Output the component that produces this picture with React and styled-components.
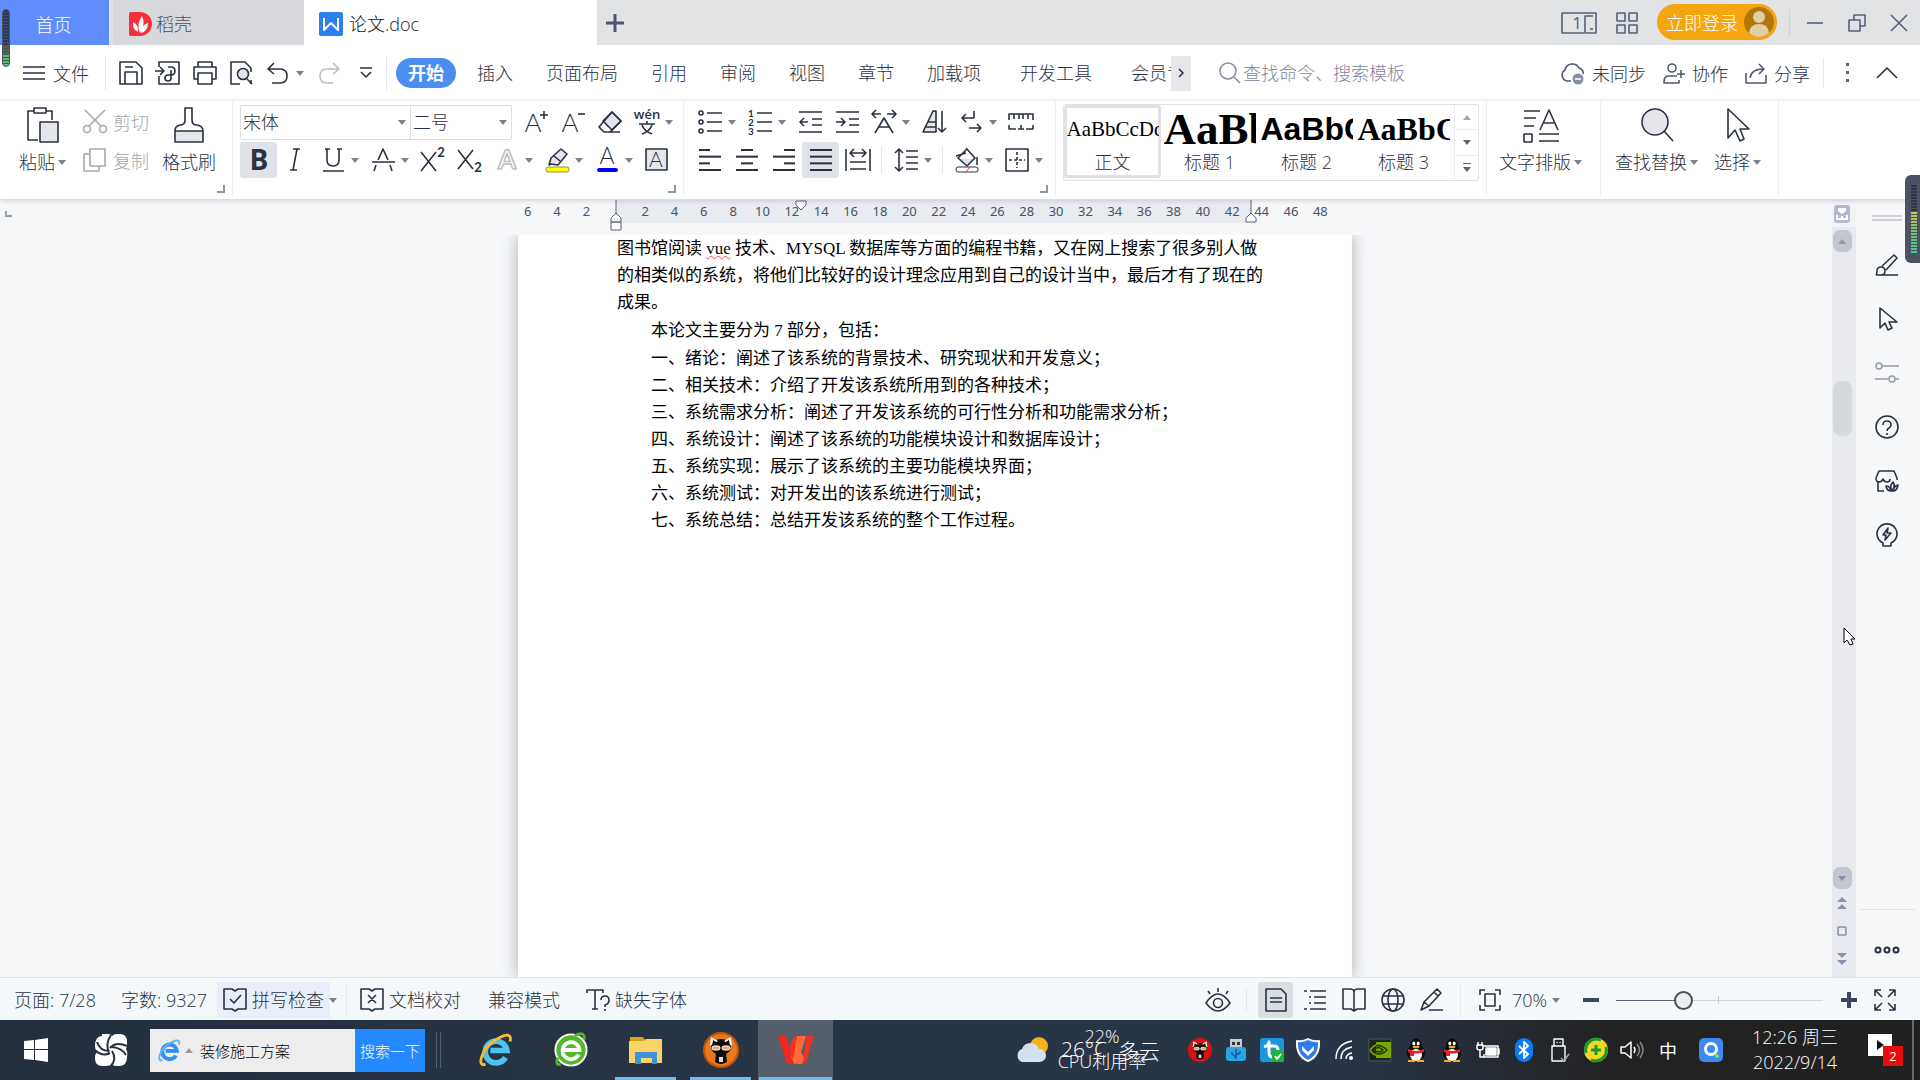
import React, { useState } from "react";
import styled, { createGlobalStyle, css } from "styled-components";

const ui = `"Open Sans", "Noto Sans CJK SC", sans-serif`;
const ink = "#2b3142";
const mute = "#a6a8ad";

const GlobalStyle = createGlobalStyle`
  * {
    box-sizing: border-box;
  }
  body {
    margin: 0;
    overflow: hidden;
    font-family: ${ui};
    font-size: 18px;
    font-weight: 300;
    color: ${ink};
  }
  button, input, select {
    margin: 0;
    padding: 0;
    border: 0;
    background: none;
    font: inherit;
    color: inherit;
  }
  svg {
    display: block;
    flex: none;
    overflow: visible;
  }
`;

const Window = styled.div`
  display: flex;
  flex-direction: column;
  height: 100vh;
  background: #f5f7f9;
  white-space: nowrap;
`;

const Row = styled.div`
  display: flex;
  align-items: center;
`;

const Spacer = styled.div`
  flex: 1;
`;

/* title bar */

const TitleBar = styled.header`
  display: flex;
  align-items: stretch;
  height: 45px;
  background: #e2e3e5;
`;

const DocTab = styled.button`
  display: flex;
  align-items: center;
  gap: ${p => (p.$active ? 6 : 4)}px;
  width: ${p => p.$width}px;
  padding: 2px 16px 0 ${p => (p.$active ? 15 : 16)}px;
  background: ${p => (p.$active ? "#fff" : "#d8d9dd")};
  border-left: ${p => (p.$active ? 0 : 4)}px solid #dfe0e3;
  color: ${p => (p.$active ? "#15171c" : "#4b5060")};
  line-height: 24px;
`;

const HomeTab = styled.button`
  width: 109px;
  padding: 3px 2px 0 0;
  background: #5f8dfb;
  color: #fff;
`;

const NewTab = styled.button`
  width: 36px;
  display: flex;
  align-items: center;
  justify-content: center;
`;

const TitleTools = styled.div`
  display: flex;
  align-items: center;
  gap: 19px;
  color: #55607a;
`;

const Login = styled.button`
  display: flex;
  align-items: center;
  gap: 6px;
  width: 120px;
  height: 36px;
  margin-bottom: 1px;
  padding: 0 3px 0 9px;
  border-radius: 18px;
  background: #f4a50f;
  color: #fff;
`;

const WindowButtons = styled.div`
  display: flex;
  align-items: center;
  height: 28px;
  border-left: 1px solid #cfd1d6;
  padding-left: 4px;
  margin-left: -7px;
`;

const WindowButton = styled.button`
  width: 42px;
  display: flex;
  justify-content: center;
`;

/* menu row */

const MenuRow = styled.nav`
  display: flex;
  align-items: center;
  height: 56px;
  background: #fff;
  padding: 0 18px 0 23px;
`;

const FileButton = styled.button`
  display: flex;
  align-items: center;
  gap: 8px;
  width: 82px;
`;

const Divider = styled.span`
  flex: none;
  width: 1px;
  height: ${p => p.$height || 34}px;
  margin-left: ${p => p.$space || 0}px;
  background: #e6e7ea;
`;

const QuickBar = styled.div`
  display: flex;
  align-items: center;
  padding-left: 6px;
  width: 280px;
`;

const QuickButton = styled.button`
  display: flex;
  align-items: center;
  justify-content: center;
  width: ${p => p.$width || 37}px;
  height: 34px;
`;

const ActiveTab = styled.button`
  width: 60px;
  height: 30px;
  margin: 0 21px 0 9px;
  border-radius: 15px;
  background: #4a8ff0;
  color: #fff;
  font-weight: 700;
  line-height: 26px;
`;

const MenuTab = styled.button`
  margin-right: ${p => (p.$wide ? 39 : 33)}px;
  line-height: 26px;
`;

const ClippedTab = styled.button`
  width: 40px;
  overflow: hidden;
  text-align: left;
  line-height: 26px;
`;

const ScrollTabs = styled.button`
  display: flex;
  align-items: center;
  justify-content: center;
  width: 20px;
  height: 35px;
  background: #e5e7ea;
`;

const CommandSearch = styled.label`
  display: flex;
  align-items: center;
  gap: 2px;
  margin-left: 28px;
  input {
    width: 220px;
    line-height: 26px;
    outline: none;
  }
  input::placeholder {
    color: #80879b;
    opacity: 1;
  }
`;

const ShareTools = styled.div`
  display: flex;
  align-items: center;
  gap: 17px;
  padding-right: 13px;
`;

const ShareButton = styled.button`
  display: flex;
  align-items: center;
  gap: 7px;
  padding-top: 1px;
  line-height: 26px;
`;

/* ribbon */

const Ribbon = styled.div`
  position: relative;
  z-index: 1;
  display: flex;
  height: 98px;
  background: #fff;
  box-shadow: 0 1px 5px rgba(40, 50, 70, 0.22);
`;

const Group = styled.section`
  position: relative;
  display: flex;
  gap: ${p => p.$gap || 0}px;
  padding: 3px ${p => p.$right || 8}px 0 ${p => p.$left || 8}px;
  margin-bottom: 3px;
  border-right: 1px solid #eceef0;
`;

const Corner = styled.i`
  position: absolute;
  right: 7px;
  bottom: 3px;
  width: 8px;
  height: 8px;
  border: solid #8e94a2;
  border-width: 0 2px 2px 0;
`;

const BigButton = styled.button`
  display: flex;
  flex-direction: column;
  align-items: center;
  gap: 6px;
  min-width: ${p => p.$width}px;
  padding-top: 3px;
  line-height: 26px;
  svg {
    margin: 0 auto;
  }
`;

const SmallButton = styled.button`
  display: flex;
  align-items: center;
  gap: 6px;
  height: 36px;
  color: ${mute};
`;

const ToolRows = styled.div`
  display: flex;
  flex-direction: column;
  gap: 2px;
  margin-left: ${p => p.$indent || 0}px;
`;

const ToolButton = styled.button`
  display: flex;
  align-items: center;
  height: 36px;
  width: ${p => (p.$caret ? 50 : 37)}px;
  border-radius: 3px;
  background: ${p => (p.$on ? "#dfe2e7" : "none")};
`;

const ToolFace = styled.span`
  display: flex;
  align-items: center;
  justify-content: center;
  width: 37px;
  height: 36px;
`;

const ToolDivider = styled.span`
  width: 1px;
  height: 28px;
  margin: 0 5px;
  background: #e3e5e8;
`;

const Fields = styled.div`
  display: flex;
  width: 272px;
  height: 35px;
  margin-right: 5px;
  border: 1px solid #dcdee2;
  border-radius: 2px;
`;

const Field = styled.label`
  display: flex;
  align-items: center;
  flex: ${p => p.$grow};
  padding: 0 4px 0 2px;
  & + & {
    border-left: 1px solid #dcdee2;
  }
  select {
    flex: 1;
    width: 0;
    height: 33px;
    appearance: none;
    outline: none;
  }
`;

const Gallery = styled.div`
  display: flex;
  width: 416px;
  height: 77px;
  border: 1px solid #dfe1e5;
  border-radius: 3px;
`;

const StyleItem = styled.button`
  display: flex;
  flex-direction: column;
  align-items: center;
  width: 97px;
  height: 73px;
  border: 3px solid ${p => (p.$on ? "#e0e2e6" : "transparent")};
  border-radius: 3px;
  line-height: 26px;
`;

const Sample = styled.span`
  display: block;
  width: 92px;
  height: 43px;
  overflow: hidden;
  text-align: left;
  color: #000;
  line-height: 43px;
  font-family: ${p => p.$font || `"Liberation Serif", serif`};
  font-size: ${p => p.$size}px;
  font-weight: ${p => (p.$bold ? 700 : 400)};
`;

const GalleryScroll = styled.div`
  display: flex;
  flex-direction: column;
  width: 24px;
  margin-left: auto;
  border-left: 1px solid #eceef0;
  button {
    flex: 1;
    display: flex;
    align-items: center;
    justify-content: center;
  }
  button + button {
    border-top: 1px solid #eceef0;
  }
`;

/* editor */

const Workspace = styled.main`
  flex: 1;
  min-height: 0;
  display: flex;
`;

const Editor = styled.div`
  flex: 1;
  display: flex;
  flex-direction: column;
  min-height: 0;
`;

const RulerRow = styled.div`
  position: relative;
  display: flex;
  flex: none;
  justify-content: center;
  height: 36px;
  padding-top: 1px;
  padding-left: 16px;
`;

const TabMark = styled.i`
  position: absolute;
  left: 5px;
  top: 12px;
  width: 7px;
  height: 6px;
  border: solid #9aa0ac;
  border-width: 0 0 2px 2px;
`;

const RulerScale = styled.div`
  position: relative;
  display: grid;
  grid-template-columns: repeat(28, 1fr);
  width: 822px;
  height: 23px;
  font: 400 13px/22px "Noto Sans", sans-serif;
  color: #4c5364;
  text-align: center;
  background: linear-gradient(90deg, transparent 103px, #e8ebf0 103px 738px, transparent 738px);
`;

const Marker = styled.svg`
  position: absolute;
  top: 0;
  left: ${p => p.$at}px;
`;

const Canvas = styled.div`
  flex: 1;
  min-height: 0;
  display: flex;
  justify-content: center;
  padding-left: 38px;
  overflow: hidden;
`;

const Page = styled.article`
  width: 834px;
  padding: 0 99px;
  background: #fff;
  box-shadow: 0 0 15px rgba(60, 66, 80, 0.4);
  color: #000;
  font-family: "Liberation Serif", "Noto Sans CJK SC", serif;
  font-size: 17px;
  font-weight: 400;
  line-height: 27px;
  p {
    margin: 0 0 1px;
  }
  ol {
    list-style: none;
    margin: 0;
    padding: 0;
  }
  li, p.indent {
    padding-left: 34px;
  }
`;

const Misspelled = styled.span`
  text-decoration: underline wavy #e0474c 1px;
`;

const ScrollColumn = styled.div`
  display: flex;
  flex-direction: column;
  align-items: center;
  width: 24px;
  padding: 0 4px 4px 0;
  background: #e8eaf0;
`;

const RulerToggle = styled.button`
  display: flex;
  justify-content: center;
  width: 24px;
  height: 28px;
  margin-right: -4px;
  padding: 6px 4px 0 0;
  background: #f2f3f7;
`;

const ScrollArrow = styled.button`
  display: flex;
  align-items: center;
  justify-content: center;
  flex: none;
  width: 19px;
  height: 22px;
  margin-top: 3px;
  border-radius: 7px;
  background: #c3c6ce;
`;

const ScrollTrack = styled.div`
  flex: 1;
  padding-top: 129px;
`;

const ScrollThumb = styled.div`
  width: 19px;
  height: 55px;
  border-radius: 8px;
  background: #d5d8dd;
`;

const PageJump = styled.button`
  display: flex;
  align-items: center;
  justify-content: center;
  height: 28px;
  width: 20px;
`;

const SidePanel = styled.aside`
  display: flex;
  flex-direction: column;
  align-items: center;
  width: 64px;
  padding: 16px 3px 0 0;
`;

const Grip = styled.span`
  width: 30px;
  height: 6px;
  margin-bottom: 17px;
  border: solid #cfd1d5;
  border-width: 2px 0;
`;

const SideButton = styled.button`
  display: flex;
  align-items: center;
  justify-content: center;
  width: 56px;
  height: 54px;
`;

const SideMore = styled.div`
  margin-top: auto;
  height: 68px;
  padding-top: 13px;
  border-top: 1px solid #dfe1e5;
`;

/* status bar */

const StatusBar = styled.footer`
  display: flex;
  align-items: center;
  height: 43px;
  border-top: 1px solid #dfe3e8;
  background: #f5f8fa;
  padding: 2px 16px 0 14px;
`;

const StatusItem = styled.button`
  display: flex;
  align-items: center;
  gap: 5px;
  height: 36px;
  width: ${p => (p.$width ? `${p.$width}px` : "auto")};
  margin-left: ${p => p.$before || 0}px;
  margin-right: ${p => (p.$tight ? 0 : 14)}px;
  line-height: 24px;
  ${p =>
    p.$tint &&
    css`
      margin: 0 16px 0 -4px;
      padding-left: 6px;
      background: #e8effa;
    `}
`;

const ViewButton = styled.button`
  display: flex;
  align-items: center;
  justify-content: center;
  width: ${p => p.$width || 35}px;
  height: 36px;
  border-radius: 3px;
  background: ${p => (p.$on ? "#d9dee3" : "none")};
`;

const ViewGroup = styled.div`
  display: flex;
  gap: 4px;
  padding: 0 11px;
`;

const Zoom = styled.input`
  appearance: none;
  width: 207px;
  height: 20px;
  margin: 0 8px 0 10px;
  background:
    linear-gradient(#c5c9d0, #c5c9d0) 102px 50% / 1px 8px no-repeat,
    linear-gradient(90deg, #59617a 68px, #d3d6db 68px) 0 50% / 100% 1px no-repeat;
  &::-webkit-slider-thumb {
    appearance: none;
    width: 19px;
    height: 19px;
    border: 2px solid #4b4f58;
    border-radius: 50%;
    background: #eceded;
  }
`;

/* taskbar */

const Taskbar = styled.footer`
  display: flex;
  align-items: center;
  height: 60px;
  background: linear-gradient(90deg, #232f3d, #283545 40%, #293546 70%, #222 84%, #202020);
  color: #fff;
`;

const StartButton = styled.button`
  display: flex;
  justify-content: center;
  width: ${p => p.$width}px;
`;

const TaskSearch = styled.form`
  display: flex;
  align-items: center;
  gap: 4px;
  width: 275px;
  height: 43px;
  padding-left: 8px;
  background: #ededed;
  font-size: 15px;
  input {
    flex: 1;
    width: 0;
    height: 30px;
    margin-left: 3px;
    color: #000;
  }
  button {
    width: 70px;
    height: 43px;
    background: #2488ff;
  }
`;

const Bars = styled.span`
  width: 5px;
  height: 36px;
  margin: 0 17px 0 11px;
  border: solid #566170;
  border-width: 0 1px;
`;

const AppButton = styled.button`
  position: relative;
  display: flex;
  align-items: center;
  justify-content: center;
  width: 75px;
  height: 60px;
  background: ${p => (p.$on ? "#545f6b" : "none")};
  &::after {
    content: "";
    position: absolute;
    bottom: 0;
    width: ${p => (p.$on ? 73 : 61)}px;
    height: 3px;
    background: ${p => (p.$open ? "#76b9ed" : "none")};
  }
`;

const Weather = styled.button`
  position: relative;
  display: flex;
  align-items: center;
  gap: 12px;
  width: 167px;
  height: 60px;
  font-size: 21px;
`;

const Forecast = styled.span`
  display: flex;
  gap: 11px;
`;

const CpuMeter = styled.span`
  position: absolute;
  left: 42px;
  top: 4px;
  width: 90px;
  text-align: center;
  font-size: 18px;
  line-height: 25px;
`;

const TrayButton = styled.button`
  display: flex;
  align-items: center;
  justify-content: center;
  width: ${p => p.$width || 36}px;
  height: 60px;
  font-weight: 400;
`;

const Clock = styled.time`
  width: 118px;
  text-align: center;
  line-height: 25px;
`;

const Notices = styled.button`
  display: flex;
  align-items: center;
  justify-content: flex-end;
  width: 60px;
  height: 60px;
  margin-right: 6px;
  padding-right: 8px;
  border-right: 2px solid #6a6a6a;
`;

/* desktop overlays */

const LevelMeter = styled.div`
  position: fixed;
  z-index: 5;
  ${p =>
    p.$left
      ? css`
          left: 2px;
          top: 9px;
          width: 8px;
          height: 58px;
          border: 1px solid #4a5270;
          border-radius: 4px;
          background:
            repeating-linear-gradient(transparent 0 2px, #3c5a4a 2px 3px),
            linear-gradient(#273866 34px, #5a605e 36px 45px, #57c06e 45px);
        `
      : css`
          right: 0;
          top: 175px;
          width: 15px;
          height: 88px;
          padding: 9px 0 0 6px;
          border-radius: 6px 0 0 6px;
          background: #4b5261;
        `}
  i {
    display: block;
    width: 6px;
    height: 70px;
    background:
      repeating-linear-gradient(#4b5261 0 1px, transparent 1px 3px),
      linear-gradient(#2f3542 27px, #d3c551 27px, #7cc06f 48px, #42c3a5);
  }
`;

const Pointer = styled.svg`
  position: fixed;
  left: 1843px;
  top: 627px;
`;

const Icon = ({ w = 24, h = 24, sw = 1.6, color = "currentColor", children }) => (
  <svg
    width={w}
    height={h}
    viewBox={`0 0 ${w} ${h}`}
    fill="none"
    stroke={color}
    strokeWidth={sw}
    strokeLinejoin="round"
    aria-hidden="true"
  >
    {children}
  </svg>
);

const Caret = ({ up, color = "#7c8190" }) => (
  <svg width="8" height="5" viewBox="0 0 8 5" aria-hidden="true">
    <path d={up ? "M0 5 4 0l4 5z" : "M0 0h8L4 5z"} fill={color} />
  </svg>
);

const Glyph = ({ x = 12, y = 20, size = 24, weight = 400, font = "Lato", fill = ink, children, ...rest }) => (
  <text x={x} y={y} fontSize={size} fontWeight={weight} fontFamily={font} fill={fill} stroke="none" textAnchor="middle" {...rest}>
    {children}
  </text>
);

const Tool = ({ label, caret, on, children }) => (
  <ToolButton type="button" title={label} aria-label={label} $caret={caret} $on={on}>
    <ToolFace>{children}</ToolFace>
    {caret && <Caret />}
  </ToolButton>
);

const Lines = ({ rows }) => (
  <Icon w={24} h={26} sw={2}>
    {rows.map(([a, b], i) => (
      <path key={i} d={`M${a} ${3 + i * (20 / (rows.length - 1))}H${b}`} />
    ))}
  </Icon>
);

const Browser = ({ size, blue, ring = "#f3bd2b" }) => (
  <svg width={size} height={size} viewBox="0 0 36 36" fill="none" aria-hidden="true">
    <path d="M28 26a11.500 11.500 0 1 1 1.500-7.500H12" stroke={blue} strokeWidth="6" />
    <path d="M7 33C-3 37 3 17 15 9S35-1 33 9" stroke={ring} strokeWidth="3" />
  </svg>
);

const Penguin = () => (
  <Icon w={22} h={24} sw={0}>
    <ellipse cx="11" cy="15" rx="9" ry="8" fill="#0b0b0b" />
    <ellipse cx="11" cy="8" rx="6" ry="7.500" fill="#0b0b0b" />
    <ellipse cx="11" cy="17" rx="6" ry="6" fill="#fff" />
    <ellipse cx="8.800" cy="5.500" rx="1.500" ry="2" fill="#fff" />
    <ellipse cx="13.200" cy="5.500" rx="1.500" ry="2" fill="#fff" />
    <ellipse cx="11" cy="9" rx="3.500" ry="1.300" fill="#f5a623" />
    <path d="M3 11q8 4 16 0v3q-8 3-16 0z" fill="#e5202b" />
    <path d="M5 13h4v5H5z" fill="#e5202b" />
    <path d="M3 22h7v2H3zM12 22h7v2h-7z" fill="#f5a623" />
  </Icon>
);

const CatBadge = ({ size, color, rim }) => (
  <svg width={size} height={size} viewBox="0 0 36 36" aria-hidden="true">
    <circle cx="18" cy="18" r="17" fill={color} stroke={rim} strokeWidth="2" />
    <ellipse cx="18" cy="15" rx="10" ry="8" fill="#0d0d0d" />
    <path d="M7 14 8 5l7 4zM29 14l-1-9-7 4z" fill="#fff" />
    <path d="M9 14 10 8l5 3zM27 14l-1-6-5 3z" fill="#0d0d0d" />
    <path d="M13 21h10l1 9q-6 4-12 0z" fill="#0d0d0d" />
    <rect x="9" y="14" width="8" height="4" rx="2" fill="#f6a25d" stroke="#fff" />
    <rect x="19" y="14" width="8" height="4" rx="2" fill="#f6a25d" stroke="#fff" />
    <path d="M16 25h4v5h-4z" fill="#ddd" />
  </svg>
);

const chapters = [
  "一、绪论：阐述了该系统的背景技术、研究现状和开发意义；",
  "二、相关技术：介绍了开发该系统所用到的各种技术；",
  "三、系统需求分析：阐述了开发该系统的可行性分析和功能需求分析；",
  "四、系统设计：阐述了该系统的功能模块设计和数据库设计；",
  "五、系统实现：展示了该系统的主要功能模块界面；",
  "六、系统测试：对开发出的该系统进行测试；",
  "七、系统总结：总结开发该系统的整个工作过程。",
];

const menuTabs = ["插入", "页面布局", "引用", "审阅", "视图", "章节"];

const rulerNumbers = [6, 4, 2, ""].concat(Array.from({ length: 24 }, (_, i) => (i + 1) * 2));

const Title = () => (
  <TitleBar>
    <HomeTab>首页</HomeTab>
    <DocTab $width={195}>
      <Icon w={23} h={24} sw={0}>
        <path d="M2 0h9a12 12 0 0 1 0 24H2q-2 0-2-2V2q0-2 2-2z" fill="#f5303a" />
        <path d="M11 21Q7 12 13 4q4 8-2 17zM9 20Q3 17 4 10q6 3 5 10zM12 21q0-8 7-10 0 8-7 10z" fill="#fff" />
      </Icon>
      稻壳
    </DocTab>
    <DocTab $active $width={293}>
      <Icon w={24} h={24} sw={2} color="#fff">
        <rect width="24" height="24" rx="2" fill="#2d7ff0" stroke="none" />
        <path d="M5 6v12l7-7 7 7V6" />
      </Icon>
      论文.doc
    </DocTab>
    <NewTab aria-label="新建">
      <Icon w={18} h={18} sw={3} color="#4c566f">
        <path d="M9 0v18M0 9h18" />
      </Icon>
    </NewTab>
    <Spacer />
    <TitleTools>
      <Icon w={36} h={22}>
        <path d="M23 21H1V1h34v20H24V4h8M29 17h3" />
        <Glyph x={16} y={17} size={17} font="Open Sans" fill="#55607a">1</Glyph>
      </Icon>
      <Icon w={22} h={22}>
        <path d="M1 1h8v8H1zM13 1h8v8h-8zM1 13h8v8H1zM13 13h8v8h-8z" />
      </Icon>
      <Login>
        立即登录
        <Icon w={30} h={30} sw={0}>
          <circle cx="15" cy="15" r="15" fill="#b1770d" />
          <circle cx="15" cy="10" r="6" fill="#e3cda2" />
          <path d="M5 26q1-9 10-9t10 9q-10 8-20 0z" fill="#e3cda2" />
        </Icon>
      </Login>
      <WindowButtons>
        <WindowButton aria-label="最小化">
          <Icon w={16} h={18}><path d="M0 9h16" /></Icon>
        </WindowButton>
        <WindowButton aria-label="还原">
          <Icon w={18} h={18}><path d="M1 6h11v11H1zM6 6V1h11v11h-5" /></Icon>
        </WindowButton>
        <WindowButton aria-label="关闭">
          <Icon w={16} h={16}><path d="m0 0 16 16M16 0 0 16" /></Icon>
        </WindowButton>
      </WindowButtons>
    </TitleTools>
  </TitleBar>
);

const Menu = () => (
  <MenuRow>
    <FileButton>
      <Icon w={22} h={16}><path d="M0 2h22M0 8h22M0 14h22" /></Icon>
      文件
    </FileButton>
    <Divider />
    <QuickBar>
      <QuickButton aria-label="保存">
        <Icon w={24} h={24}><path d="M1 1h16l6 6v16H1zM6 23V11h12v12M6 6h8" /></Icon>
      </QuickButton>
      <QuickButton aria-label="输出为PDF">
        <Icon w={26} h={24}>
          <path d="M4 6V1h20v22H4v-8M0 10h9M5 6l4 4-4 4" />
          <path d="M13 6h3q4 0 4 4t-4 4h-3q-3 0-3 3t3 3 3-3V9" />
        </Icon>
      </QuickButton>
      <QuickButton aria-label="打印">
        <Icon w={24} h={24}><path d="M5 6V1h14v5M5 18H1V6h22v12h-4M5 12h14v11H5z" /></Icon>
      </QuickButton>
      <QuickButton aria-label="打印预览">
        <Icon w={24} h={24}>
          <path d="M10 23H1V1h14l6 6v4M21 19v4" />
          <circle cx="13" cy="13" r="5.500" fill="#e4e6eb" />
          <path d="m17 18 5 5" />
        </Icon>
      </QuickButton>
      <QuickButton aria-label="撤销" $width={36}>
        <Icon w={22} h={22}><path d="M7 1 1 7l6 5M1 7h12q7 0 7 7t-7 7H5" /></Icon>
      </QuickButton>
      <Caret />
      <QuickButton aria-label="恢复" $width={50}>
        <Icon w={22} h={22} color="#b9bcc3"><path d="m15 1 6 6-6 5M21 7H9q-7 0-7 7t7 7h6" /></Icon>
      </QuickButton>
      <QuickButton aria-label="自定义" $width={24}>
        <Icon w={12} h={12}><path d="M0 1h12M1 5l5 5 5-5" /></Icon>
      </QuickButton>
    </QuickBar>
    <Divider />
    <ActiveTab>开始</ActiveTab>
    {menuTabs.map(name => (
      <MenuTab key={name}>{name}</MenuTab>
    ))}
    <MenuTab $wide>加载项</MenuTab>
    <MenuTab $wide>开发工具</MenuTab>
    <ClippedTab>会员专享</ClippedTab>
    <ScrollTabs aria-label="更多选项卡">
      <Icon w={6} h={10}><path d="m1 1 4 4-4 4" /></Icon>
    </ScrollTabs>
    <CommandSearch>
      <Icon w={22} h={22} color="#8d93a5"><circle cx="9" cy="9" r="8" /><path d="m15 15 6 6" /></Icon>
      <input aria-label="查找命令" placeholder="查找命令、搜索模板" />
    </CommandSearch>
    <Spacer />
    <ShareTools>
      <ShareButton>
        <Icon w={25} h={22} color="#4f5a72">
          <path d="M11 18H7a6 6 0 0 1-2-11A7.500 7.500 0 0 1 19 5q5 2 4 6" />
          <circle cx="18" cy="16" r="5.500" fill="#8590a8" stroke="none" />
          <path d="M15 16h6" stroke="#fff" />
        </Icon>
        未同步
      </ShareButton>
      <ShareButton>
        <Icon w={22} h={22} color="#4f5a72">
          <circle cx="9" cy="5" r="4" />
          <path d="M14 13H5q-4 0-4 7h15v-3M18 7v8M14 11h8" />
        </Icon>
        协作
      </ShareButton>
      <ShareButton>
        <Icon w={22} h={22} color="#4f5a72">
          <path d="M1 10v10h20v-8M5 15q1-9 14-9M14 1l5 5-5 5" />
        </Icon>
        分享
      </ShareButton>
    </ShareTools>
    <Divider $height={30} />
    <QuickButton aria-label="更多" $width={48}>
      <Icon w={4} h={20} sw={0}>
        <path d="M0 0h3v3H0zM0 8h3v3H0zM0 16h3v3H0z" fill="#5c6375" />
      </Icon>
    </QuickButton>
    <QuickButton aria-label="收起功能区" $width={30}>
      <Icon w={22} h={12}><path d="M1 11 11 1l10 10" /></Icon>
    </QuickButton>
  </MenuRow>
);

const Dropdown = ({ children }) => (
  <Row as="span">
    {children}
    <svg width="12" height="5" viewBox="-3 0 12 5" aria-hidden="true"><path d="M0 0h8L4 5z" fill="#7c8190" /></svg>
  </Row>
);

const RibbonBar = () => (
  <Ribbon>
    <Group $left={18} $right={3}>
      <BigButton $width={50}>
        <Icon w={34} h={36}>
          <path d="M12 33H2V4h6M20 4h6v9" />
          <path d="M8 1h12v5H8z" />
          <path d="M14 15h18v20H14z" fill="#e4e6eb" />
        </Icon>
        <Dropdown>粘贴</Dropdown>
      </BigButton>
      <ToolRows $indent={15}>
        <SmallButton>
          <Icon w={24} h={24} color={mute}>
            <circle cx="4" cy="19" r="3.500" /><circle cx="20" cy="19" r="3.500" />
            <path d="M2 0l16 16M22 0 6 16" />
          </Icon>
          剪切
        </SmallButton>
        <SmallButton>
          <Icon w={24} h={24} color={mute}><path d="M7 1h15v17H7zM7 6H1v17h15v-5" /></Icon>
          复制
        </SmallButton>
      </ToolRows>
      <BigButton $width={80}>
        <Icon w={30} h={36}>
          <path d="M1 24h28v11H1z" fill="#e4e6eb" />
          <path d="M1 24q0-5 5-6 5 0 5-5V1h7v12q0 5 5 5 6 1 6 6" />
        </Icon>
        格式刷
      </BigButton>
      <Corner />
    </Group>

    <Group $left={7} $right={5}>
      <ToolRows>
        <Row>
          <Fields>
            <Field $grow={172}>
              <select aria-label="字体"><option>宋体</option></select>
              <Caret />
            </Field>
            <Field $grow={99}>
              <select aria-label="字号"><option>二号</option></select>
              <Caret />
            </Field>
          </Fields>
          <Tool label="增大字号">
            <Icon w={24} h={24}><Glyph x={9} y={22} size={26} weight={300}>A</Glyph><path d="M20 1v8M16 5h8" /></Icon>
          </Tool>
          <Tool label="减小字号">
            <Icon w={24} h={24}><Glyph x={9} y={22} size={26} weight={300}>A</Glyph><path d="M17 4h7" /></Icon>
          </Tool>
          <Tool label="清除格式">
            <Icon w={24} h={24}>
              <path d="M14 2l9 9-9 9-9-9z" fill="#e4e6eb" />
              <path d="m14 2 9 9-11 11H6l-5-5zM6 22h16" />
            </Icon>
          </Tool>
          <Tool label="拼音指南" caret>
            <Icon w={26} h={26}>
              <Glyph x={13} y={10} size={13} font="Open Sans" weight={600}>wén</Glyph>
              <path d="M5 15h16M13 12v3M8 16q2 6 10 9M18 16q-2 6-10 9" />
            </Icon>
          </Tool>
        </Row>
        <Row>
          <Tool label="加粗" on><Icon w={24} h={26}><Glyph y={23} size={28} weight={700} font="Open Sans">B</Glyph></Icon></Tool>
          <Tool label="倾斜"><Icon><path d="M9 1h7M6 22h7M13 1 9 22" /></Icon></Tool>
          <Tool label="下划线" caret>
            <Icon w={24} h={26}><path d="M4 2h5M16 2h5M6 2v11q0 6 6 6t6-6V2M2 24h21" /></Icon>
          </Tool>
          <Tool label="删除线" caret>
            <Icon w={24} h={26}><path d="M7 13l5-11 5 11M1 15h23M5 18l-2 6M19 18l2 6" /></Icon>
          </Tool>
          <Tool label="上标"><Icon w={26}><path d="M1 4l15 19M16 4 1 23" /><Glyph x={21} y={9} size={13} weight={700}>2</Glyph></Icon></Tool>
          <Tool label="下标"><Icon w={26}><path d="M1 2l15 19M16 2 1 21" /><Glyph x={21} y={24} size={13} weight={700}>2</Glyph></Icon></Tool>
          <Tool label="文字效果" caret>
            <Icon><Glyph y={21} size={26} weight={700} fill="#fff" style={{ stroke: "#b9bcc3", strokeWidth: 1.5 }}>A</Glyph></Icon>
          </Tool>
          <Tool label="突出显示" caret>
            <Icon w={26} h={26}>
              <path d="M17 2l6 5-9 11-7-1-2 1 2-7zM10 9l6 5" fill="#e4e6eb" />
              <rect x="2" y="20" width="23" height="5" rx="2" fill="#ffff00" stroke="#8d8d50" strokeWidth="1" />
            </Icon>
          </Tool>
          <Tool label="字体颜色" caret>
            <Icon w={24} h={26}>
              <Glyph y={17} size={23} weight={300}>A</Glyph>
              <rect x="2" y="21" width="21" height="4" rx="2" fill="#0000f0" stroke="none" />
            </Icon>
          </Tool>
          <Tool label="字符底纹">
            <Icon><rect x="1" y="1" width="21" height="21" fill="#e4e6eb" /><Glyph x={11} y={19} size={21} weight={300}>A</Glyph></Icon>
          </Tool>
        </Row>
      </ToolRows>
      <Corner />
    </Group>

    <Group $left={7} $right={7}>
      <ToolRows>
        <Row>
          <Tool label="项目符号" caret>
            <Icon w={24} h={24}>
              <circle cx="3" cy="3" r="2" /><circle cx="3" cy="12" r="2" /><circle cx="3" cy="21" r="2" />
              <path d="M9 3h15M9 12h15M9 21h15" />
            </Icon>
          </Tool>
          <Tool label="编号" caret>
            <Icon w={24} h={26}>
              <Glyph x={3} y={8} size={10} weight={700}>1</Glyph>
              <Glyph x={3} y={17} size={10} weight={700}>2</Glyph>
              <Glyph x={3} y={26} size={10} weight={700}>3</Glyph>
              <path d="M9 4h15M9 13h15M9 22h15" />
            </Icon>
          </Tool>
          <Tool label="减少缩进">
            <Icon w={24} h={24}><path d="M1 2h23M14 9h10M14 15h10M1 22h23M2 12h8M6 8l-4 4 4 4" /></Icon>
          </Tool>
          <Tool label="增加缩进">
            <Icon w={24} h={24}><path d="M1 2h23M14 9h10M14 15h10M1 22h23M1 12h9M6 8l4 4-4 4" /></Icon>
          </Tool>
          <Tool label="中文版式" caret>
            <Icon w={26} h={24}>
              <path d="M4 23 13 8l9 15M8 17h10M1 4h9M5 0 1 4l4 4M16 4h9M21 0l4 4-4 4" />
            </Icon>
          </Tool>
          <Tool label="排序">
            <Icon w={26} h={24}>
              <path d="M2 22 12 1h3v21zM7 12h8M4 17h11" fill="#e4e6eb" />
              <path d="M21 1v21M17 18l4 4 4-4" />
            </Icon>
          </Tool>
          <Tool label="换行标记" caret>
            <Icon w={24} h={24}><path d="M15 1v7H3M7 4 3 8l4 4M10 18h12M18 14l4 4-4 4" /></Icon>
          </Tool>
          <Tool label="制表位">
            <Icon w={26} h={20}><path d="M1 8V2h24v6M6 2v5M11 2v5M15 2v5M20 2v5M1 13v4h7M13 17v-4M10 17h6M18 17h7v-4" /></Icon>
          </Tool>
        </Row>
        <Row>
          <Tool label="左对齐"><Lines rows={[[1, 12], [1, 23], [1, 12], [1, 23]]} /></Tool>
          <Tool label="居中"><Lines rows={[[6, 18], [1, 23], [6, 18], [1, 23]]} /></Tool>
          <Tool label="右对齐"><Lines rows={[[12, 23], [1, 23], [12, 23], [1, 23]]} /></Tool>
          <Tool label="两端对齐" on><Lines rows={[[1, 23], [1, 23], [1, 23], [1, 23]]} /></Tool>
          <Tool label="分散对齐">
            <Icon w={26} h={26}><path d="M1 2v22M25 2v22M5 15h16M5 22h16M5 6h16M9 2 5 6l4 4M17 2l4 4-4 4" /></Icon>
          </Tool>
          <ToolDivider />
          <Tool label="行距" caret>
            <Icon w={24} h={26}><path d="M5 2v22M1 6l4-4 4 4M1 20l4 4 4-4M12 4h12M12 10h12M12 16h12M12 22h12" /></Icon>
          </Tool>
          <ToolDivider />
          <Tool label="底纹" caret>
            <Icon w={26} h={26}>
              <path d="M4 12h17l-8 7z" fill="#dcdfe4" stroke="none" />
              <path d="M12 1l9 10-8 8-9-8 9-9M2 9l10-3M23 10v8" />
              <rect x="2" y="20" width="22" height="5" rx="2" fill="#fff" strokeWidth="1" />
              <path d="m12 25 4-5" stroke="#e33" strokeWidth="1" />
            </Icon>
          </Tool>
          <Tool label="边框" caret>
            <Icon w={24} h={24}><path d="M1 1h22v22H1z" /><path d="M12 4v16M4 12h16" strokeDasharray="3 2" /></Icon>
          </Tool>
        </Row>
      </ToolRows>
      <Corner />
    </Group>

    <Group $left={7} $right={7}>
      <Gallery>
        <StyleItem $on>
          <Sample $size={21}>AaBbCcDd</Sample>正文
        </StyleItem>
        <StyleItem>
          <Sample $size={45} $bold>AaBb</Sample>标题 1
        </StyleItem>
        <StyleItem>
          <Sample $size={32} $bold $font={`"Liberation Sans", sans-serif`}>AaBbC</Sample>标题 2
        </StyleItem>
        <StyleItem>
          <Sample $size={32} $bold>AaBbC</Sample>标题 3
        </StyleItem>
        <GalleryScroll>
          <button aria-label="上一行"><Caret up color="#a3a7b1" /></button>
          <button aria-label="下一行"><Caret color="#5c6375" /></button>
          <button aria-label="更多样式">
            <svg width="8" height="9" viewBox="0 0 8 9" fill="#5c6375"><path d="M0 0h8v1H0zM0 4h8L4 9z" /></svg>
          </button>
        </GalleryScroll>
      </Gallery>
    </Group>

    <Group $left={11} $right={16}>
      <BigButton $width={86}>
        <Icon w={36} h={36}>
          <path d="M1 4h16M1 11h12M1 19h10M1 27h8v8H1zM16 27h20M16 34h20M17 23 26 3l9 20M21 16h10" />
        </Icon>
        <Dropdown>文字排版</Dropdown>
      </BigButton>
    </Group>
    <Group $left={13} $right={15} $gap={13}>
      <BigButton $width={86}>
        <Icon w={36} h={36}>
          <circle cx="16" cy="15" r="13" fill="#e4e6eb" /><path d="m25 24 9 10" />
        </Icon>
        <Dropdown>查找替换</Dropdown>
      </BigButton>
      <BigButton $width={50}>
        <Icon w={24} h={36}><path d="M2 2v29l7-8 5 11 4-2-4-10h9z" /></Icon>
        <Dropdown>选择</Dropdown>
      </BigButton>
    </Group>
  </Ribbon>
);

const Document = () => (
  <Editor>
    <RulerRow>
      <TabMark />
      <RulerScale>
        {rulerNumbers.map((n, i) => (
          <span key={i}>{n}</span>
        ))}
        <Marker $at={97} width="12" height="32" fill="#fff" stroke="#5c6270">
          <path d="M6 0v14M1 22v-4l5-5 5 5v4zM1 22h10v8H1z" />
        </Marker>
        <Marker $at={282} width="12" height="12" fill="#fff" stroke="#5c6270">
          <path d="M1 1h10v4l-5 5-5-5z" />
        </Marker>
        <Marker $at={732} width="12" height="32" fill="#fff" stroke="#5c6270">
          <path d="M6 0v14M1 22v-4l5-5 5 5v4z" />
        </Marker>
      </RulerScale>
    </RulerRow>
    <Canvas>
      <Page>
        <p>
          图书馆阅读 <Misspelled>vue</Misspelled> 技术、MYSQL 数据库等方面的编程书籍，又在网上搜索了很多别人做
          <br />
          的相类似的系统，将他们比较好的设计理念应用到自己的设计当中，最后才有了现在的
          <br />
          成果。
        </p>
        <p className="indent">本论文主要分为 7 部分，包括：</p>
        <ol>
          {chapters.map(line => (
            <li key={line}>{line}</li>
          ))}
        </ol>
      </Page>
    </Canvas>
  </Editor>
);

const Scrollbar = () => (
  <ScrollColumn>
    <RulerToggle aria-label="标尺">
      <Icon w={16} h={18} sw={0}>
        <rect width="16" height="18" rx="3" fill="#b4b9cb" />
        <path d="M4 3h8v3L8 9 4 6zM2 10h2v3h3v-2h2v2h3v-3h2v5H2z" fill="#fff" />
      </Icon>
    </RulerToggle>
    <ScrollArrow aria-label="向上"><Caret up color="#9197a6" /></ScrollArrow>
    <ScrollTrack><ScrollThumb /></ScrollTrack>
    <ScrollArrow aria-label="向下"><Caret color="#848da6" /></ScrollArrow>
    <PageJump aria-label="上一页">
      <Icon w={10} h={12} sw={0}><path d="M0 5 5 0l5 5zM0 12l5-5 5 5z" fill="#8a92ab" /></Icon>
    </PageJump>
    <PageJump aria-label="选择浏览对象">
      <Icon w={10} h={10} color="#8a92ab"><rect x="1" y="1" width="8" height="8" rx="1" /></Icon>
    </PageJump>
    <PageJump aria-label="下一页">
      <Icon w={10} h={12} sw={0}><path d="M0 0h10L5 5zM0 7h10l-5 5z" fill="#8a92ab" /></Icon>
    </PageJump>
  </ScrollColumn>
);

const Side = () => (
  <SidePanel>
    <Grip />
    <SideButton aria-label="样式">
      <Icon><path d="M1 22h22M1 22q1-1 1-4 0-4 4-4t4 4-4 4M7 13 19 2l3 3-11 12" /></Icon>
    </SideButton>
    <SideButton aria-label="选择">
      <Icon><path d="M5 1v20l5-5 3 7 4-2-3-6h8z" /></Icon>
    </SideButton>
    <SideButton aria-label="设置">
      <Icon color="#9a9da3">
        <circle cx="4" cy="5" r="3" /><path d="M7 5h17M0 18h13M20 18h4" /><circle cx="17" cy="18" r="3" />
      </Icon>
    </SideButton>
    <SideButton aria-label="帮助">
      <Icon>
        <circle cx="12" cy="12" r="11" />
        <path d="M8 10q0-4 4-4t4 4q0 2-2 3t-2 3M12 18v2" />
      </Icon>
    </SideButton>
    <SideButton aria-label="资源库">
      <Icon>
        <path d="M9 22H3V12M1 9l3-7h15l3 7M1 9q0 4 3 4t4-3q1 3 4 3t3-3M22 9v2" />
        <path d="M17 22q-3-5 1-9 3 4-1 9zM16 22q-4 0-5-5 4 0 5 5zM18 22q4 0 5-6-4 1-5 6z" />
      </Icon>
    </SideButton>
    <SideButton aria-label="灵感">
      <Icon><path d="M8 20a10 10 0 1 1 8 0v3H8zM13 5l-5 7h3l-1 5 6-7h-4z" /></Icon>
    </SideButton>
    <SideMore>
      <SideButton aria-label="更多">
        <Icon w={26} h={8} sw={2}>
          <circle cx="4" cy="4" r="2.500" /><circle cx="13" cy="4" r="2.500" /><circle cx="22" cy="4" r="2.500" />
        </Icon>
      </SideButton>
    </SideMore>
  </SidePanel>
);

const Status = () => {
  const [zoom, setZoom] = useState(70);

  return (
    <StatusBar>
      <StatusItem $width={93}>页面: 7/28</StatusItem>
      <StatusItem>字数: 9327</StatusItem>
      <StatusItem $tint $width={113}>
        <Icon><path d="M12 3 9 1H1v20h8l3 2 3-2h8V1h-8zM7 11l4 4 7-8" /></Icon>
        拼写检查
        <Caret />
      </StatusItem>
      <Divider $height={28} />
      <StatusItem $before={13} $width={114}>
        <Icon><path d="M12 3 9 1H1v20h8l3 2 3-2h8V1h-8zM8 7l8 8M16 7l-8 8" /></Icon>
        文档校对
      </StatusItem>
      <StatusItem $width={84}>兼容模式</StatusItem>
      <StatusItem>
        <Icon><path d="M1 5V2h16v3M9 2v19M6 21h6M15 12q0-4 4-4t4 4-4 5v2M19 21v2" /></Icon>
        缺失字体
      </StatusItem>
      <Spacer />
      <ViewButton aria-label="护眼模式">
        <Icon w={26} h={24}>
          <path d="M1 15q12-18 24 0-12 16-24 0z" /><circle cx="13" cy="15" r="4.500" />
          <path d="M13 0v4M3 3l2 3M23 3l-2 3" />
        </Icon>
      </ViewButton>
      <Divider $height={22} $space={11} />
      <ViewGroup>
        <ViewButton aria-label="页面视图" $on>
          <Icon w={22} h={24}><path d="M1 1h15l5 5v17H1zM5 10h12M5 14h12" /></Icon>
        </ViewButton>
        <ViewButton aria-label="大纲">
          <Icon w={22} h={24}><path d="M0 3h3M6 3h16M5 9h2M10 9h12M5 15h2M10 15h12M0 21h3M6 21h16" /></Icon>
        </ViewButton>
        <ViewButton aria-label="阅读版式">
          <Icon><path d="M12 4q0-3-4-3H1v20h8l3 2 3-2h8V1h-7q-4 0-4 3v19" /></Icon>
        </ViewButton>
        <ViewButton aria-label="Web版式">
          <Icon><circle cx="12" cy="12" r="11" /><ellipse cx="12" cy="12" rx="5" ry="11" /><path d="M2 8h20M2 16h20" /></Icon>
        </ViewButton>
        <ViewButton aria-label="写作模式">
          <Icon><path d="m1 22 3-8L17 1l4 4L9 18zM4 14l5 4M9 22h14M14 4l4 4 3-3" /></Icon>
        </ViewButton>
      </ViewGroup>
      <Divider $height={28} />
      <ViewButton aria-label="最佳显示比例" $width={57}>
        <Icon w={22} h={22}><path d="M1 6V1h5M16 1h5v5M21 16v5h-5M6 21H1v-5M6 5h10v12H6z" /></Icon>
      </ViewButton>
      <StatusItem $tight $before={-6} $width={63}>
        {zoom}%<Caret />
      </StatusItem>
      <ViewButton aria-label="缩小" $width={31}>
        <Icon w={16} h={16} sw={4} color="#3c4660"><path d="M0 8h16" /></Icon>
      </ViewButton>
      <Zoom
        type="range"
        aria-label="显示比例"
        min="8"
        max="208"
        value={zoom}
        onChange={e => setZoom(Number(e.target.value))}
      />
      <ViewButton aria-label="放大">
        <Icon w={16} h={16} sw={4} color="#3c4660"><path d="M0 8h16M8 0v16" /></Icon>
      </ViewButton>
      <ViewButton aria-label="全屏" $width={38}>
        <Icon w={22} h={22}>
          <path d="M1 7V1h6M1 1l7 7M15 1h6v6M21 1l-7 7M1 15v6h6M1 21l7-7M21 15v6h-6M21 21l-7-7" />
        </Icon>
      </ViewButton>
    </StatusBar>
  );
};

const Tray = () => (
  <>
    <TrayButton aria-label="助手"><CatBadge size={24} color="#e01010" rim="#e01010" /></TrayButton>
    <TrayButton aria-label="U盘">
      <Icon w={20} h={24} sw={1.5} color="#0d5b94">
        <path d="M4 1h12v9H4z" fill="#c6cdd3" stroke="none" /><path d="M6 4h3v3H6zM11 4h3v3h-3z" fill="#333" stroke="none" />
        <rect y="9" width="20" height="14" rx="3" fill="#2ea2e6" stroke="none" /><path d="M10 11v10M6 14v2l4 3M14 13v2l-4 2" />
      </Icon>
    </TrayButton>
    <TrayButton aria-label="同步">
      <Icon sw={3} color="#fff">
        <rect width="24" height="24" rx="3" fill="#1b95dc" stroke="none" />
        <path d="M4 8q4 1 5-4v11q0 4 4 4M9 8h5q4 0 4 4" />
        <rect x="12" y="12" width="12" height="12" rx="2" fill="#1bb53c" stroke="none" /><path d="m15 18 2 3 4-5" strokeWidth="2" />
      </Icon>
    </TrayButton>
    <TrayButton aria-label="安全">
      <Icon sw={2} color="#fff">
        <path d="M12 1q5 3 11 2 1 15-11 20Q0 18 1 3q6 1 11-2z" fill="#2e7bf0" /><path d="m6 8 6 6 6-6v4l-6 6-6-6z" fill="#fff" stroke="none" />
      </Icon>
    </TrayButton>
    <TrayButton aria-label="无线网络">
      <Icon w={20} h={22} sw={1.5}>
        <path d="M2 20Q2 5 18 2M7 20q0-10 11-12M12 20q0-5 6-6" /><circle cx="17" cy="19" r="2" fill="#fff" stroke="none" />
      </Icon>
    </TrayButton>
    <TrayButton aria-label="显卡">
      <Icon sw={1} color="#555">
        <path d="M1 1h22v22H1z" fill="#20251c" /><path d="M8 4h15v16H8z" fill="#76a800" stroke="none" />
        <path d="M2 12q8-9 17 0-8 8-17 0zM6 12q4-5 9 0-4 4-9 0z" fill="none" stroke="#243305" strokeWidth="1.5" /><path d="M2 12q3-4 6-5M2 12q3 5 6 5" stroke="#76a800" strokeWidth="1.500" />
      </Icon>
    </TrayButton>
    <TrayButton aria-label="QQ"><Penguin /></TrayButton>
    <TrayButton aria-label="QQ"><Penguin /></TrayButton>
    <TrayButton aria-label="电池">
      <Icon w={24} h={18} sw={1.5}>
        <path d="M7 5h15v11H8v-3M22 8h1v5h-1M2 1v4M6 1v4M1 4h6v3q0 2-3 2t-3-2zM4 9v7h4" /><path d="M10 7h10v7H10z" fill="#fff" />
      </Icon>
    </TrayButton>
    <TrayButton aria-label="蓝牙">
      <Icon w={18} h={24} sw={1.8}>
        <rect width="18" height="24" rx="9" fill="#0a7df2" stroke="none" /><path d="m4 8 9 8-4 4V4l4 4-9 8" />
      </Icon>
    </TrayButton>
    <TrayButton aria-label="弹出设备">
      <Icon w={18} h={24} sw={1.4}><path d="M3 1h9v7H3zM1 8h13v15H1zM6 4v1M9 4v1" /><path d="m10 20 3 3 5-7" stroke="#aaa" /></Icon>
    </TrayButton>
    <TrayButton aria-label="360">
      <Icon sw={3} color="#1a9b2e">
        <circle cx="12" cy="12" r="12" fill="#f5d623" stroke="none" /><path d="M2 15A11 11 0 0 1 17 2M22 9A11 11 0 0 1 7 22" />
        <path d="M12 7v10M7 12h10" />
      </Icon>
    </TrayButton>
    <TrayButton aria-label="音量">
      <Icon sw={1.5}><path d="M1 9h4l6-5v16l-6-5H1zM14 9q2 3 0 6" /><path d="M17 6q5 6 0 12M20 4q6 8 0 16" stroke="#888" /></Icon>
    </TrayButton>
    <TrayButton>中</TrayButton>
    <TrayButton $width={50} aria-label="输入法">
      <Icon sw={3} color="#fff">
        <rect width="24" height="24" rx="5" fill="#3b8bf2" stroke="none" /><circle cx="12" cy="11" r="5.500" />
        <circle cx="18" cy="18" r="2" fill="#7ee05a" stroke="none" />
      </Icon>
    </TrayButton>
  </>
);

const Tasks = () => (
  <Taskbar>
    <StartButton $width={72} aria-label="开始">
      <Icon sw={0}><path d="m0 3 10-1v9H0zM11 2l13-2v11H11zM0 12h10v10L0 21zM11 12h13v12l-13-2z" fill="#fff" /></Icon>
    </StartButton>
    <StartButton $width={78} aria-label="浏览器">
      <Icon w={34} h={34} sw={2} color="#25313f">
        <path
          d="M8 1h6q3 0 4 2 2-2 5-2h3q7 0 7 8v2q0 3-1 5 2 3 1 8 0 9-8 9h-3q-3 0-4-2-2 2-6 2H8q-7 0-7-8 0-4 2-6-2-2-2-6 0-10 7-10z"
          fill="#fff"
          stroke="none"
        />
        <path d="M15 19Q11 11 17 2M16 15q6-7 17-2M18 14q10 1 14 8M18 18q5 8-1 15M16 20Q8 24 1 17M15 18Q6 18 3 9" />
      </Icon>
    </StartButton>
    <TaskSearch onSubmit={e => e.preventDefault()}>
      <Browser size={23} blue="#2f8df5" ring="#5fb4f8" />
      <Caret up color="#9a9a9a" />
      <input aria-label="搜索" defaultValue="装修施工方案" />
      <button>搜索一下</button>
    </TaskSearch>
    <Bars />
    <AppButton aria-label="Internet Explorer"><Browser size={34} blue="#4cc4ee" /></AppButton>
    <AppButton aria-label="360浏览器">
      <svg width="34" height="34" viewBox="0 0 36 36" fill="none" aria-hidden="true">
        <circle cx="18" cy="18" r="16.500" fill="#54b82c" stroke="#fff" strokeWidth="2" />
        <path d="M26 23a9 9 0 1 1 1-5H11" stroke="#fff" strokeWidth="4" />
        <path d="M7 33q-6 2-3-7M22 3q11-6 10 4" stroke="#54b82c" strokeWidth="3" />
      </svg>
    </AppButton>
    <AppButton $open aria-label="文件资源管理器">
      <Icon w={34} h={28} sw={0}>
        <path d="M1 1h13l3 4H1z" fill="#d9a21b" /><path d="M0 5h15l2-2h16v24H0z" fill="#fbd367" />
        <path d="M6 28V16h22v12h-5v-6H12v6z" fill="#3f92d6" />
      </Icon>
    </AppButton>
    <AppButton $open aria-label="助手"><CatBadge size={36} color="#e8791c" rim="#c8520d" /></AppButton>
    <AppButton $open $on aria-label="WPS">
      <Icon w={36} h={28} sw={0}>
        <path d="M0 0h8l8 28h-4q-3 0-4-3z" fill="#f0261f" /><path d="M19 0h9l-8 26q-1 2-4 2l-3-8z" fill="#ff6a3c" />
        <path d="M19 0q-3 0-4 3l-4 9 4 12z" fill="#f2301f" />
        <path d="M29 0h7l-8 26q-1 2-4 2z" fill="#f2301f" /><path d="M22 14l-3 14h5l2-6z" fill="#ff6a3c" />
      </Icon>
    </AppButton>
    <Spacer />
    <Weather>
      <svg width="34" height="26" viewBox="0 0 34 26" aria-hidden="true">
        <circle cx="24" cy="9" r="9" fill="#f8b117" />
        <path d="M7 25a7 7 0 0 1 0-13 9 9 0 0 1 17 0 6.500 6.500 0 0 1 1 13z" fill="#d5e0ef" />
      </svg>
      <Forecast><span>26°C</span><span>多云</span></Forecast>
      <CpuMeter>22%<br />CPU利用率</CpuMeter>
    </Weather>
    <Tray />
    <Clock>12:26 周三<br />2022/9/14</Clock>
    <Notices aria-label="通知">
      <Icon w={36} h={32} sw={0}>
        <path d="M0 0h24v22H0z" fill="#fff" /><path d="m9 6 7 5-7 5z" fill="#111" />
        <path d="M15 12h20v20H15z" fill="#e50d0d" />
        <Glyph x={25} y={27} size={13} font="Open Sans" fill="#fff">2</Glyph>
      </Icon>
    </Notices>
  </Taskbar>
);

const App = () => (
  <Window>
    <GlobalStyle />
    <Title />
    <Menu />
    <RibbonBar />
    <Workspace>
      <Document />
      <Scrollbar />
      <Side />
    </Workspace>
    <Status />
    <Tasks />
    <LevelMeter $left />
    <LevelMeter><i /></LevelMeter>
    <Pointer width="14" height="20" fill="#fff" stroke="#000">
      <path d="M1 1v15l3-3 3 5 3-1-2-5h4z" />
    </Pointer>
  </Window>
);

export default App;
